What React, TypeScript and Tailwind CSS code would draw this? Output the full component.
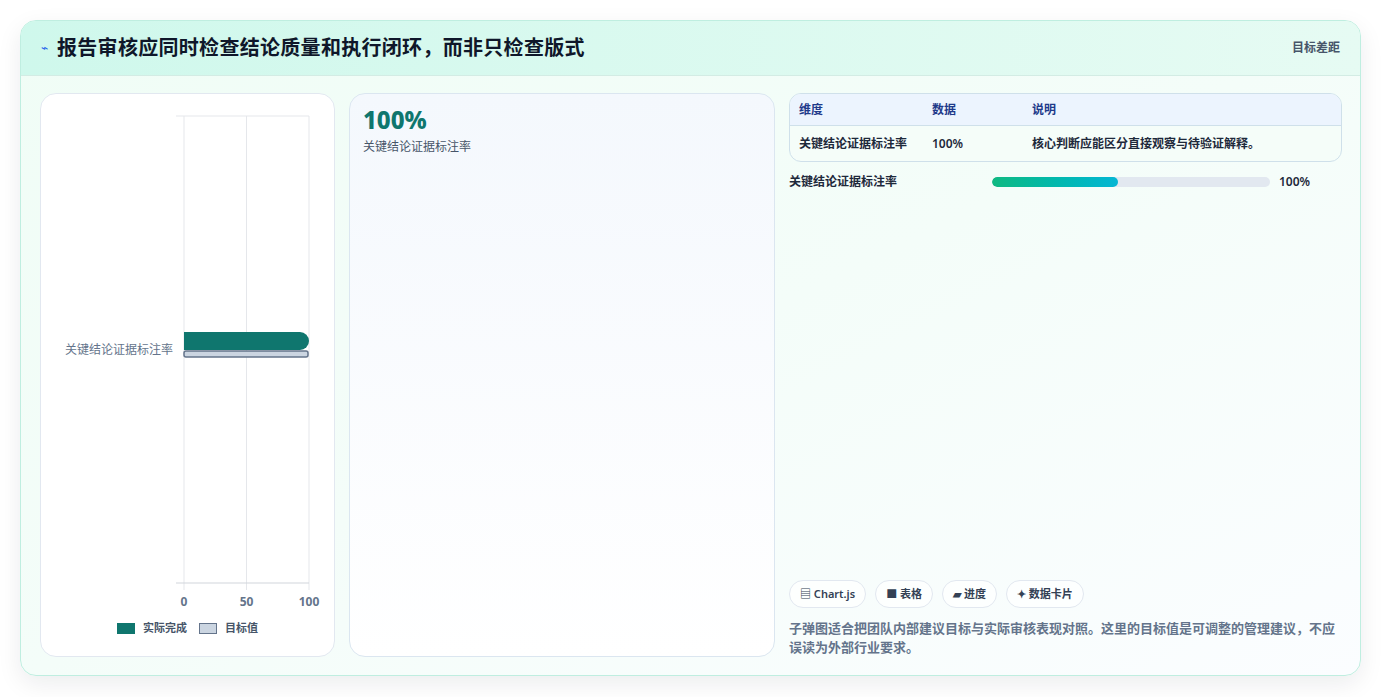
const font = { fontFamily: '"Noto Sans", "Noto Sans CJK SC", sans-serif' };

function BulletChart() {
  // plot area inside svg: x 143..268 (0..100), y 22..489
  const x0 = 143;
  const w = 125;
  return (
    <svg width="294" height="520" className="block shrink-0">
      <line x1={135} y1={22} x2={268} y2={22} stroke="#e5e7eb" />
      {[0, 50, 100].map((v) => (
        <line key={v} x1={x0 + (w * v) / 100} y1={22} x2={x0 + (w * v) / 100} y2={496} stroke="#e5e7eb" />
      ))}
      <line x1={135} y1={489} x2={268} y2={489} stroke="#d1d5db" />
      <text x={132} y={260} textAnchor="end" fontSize="12" fill="#64748b" style={font}>关键结论证据标注率</text>
      <path d={`M${x0} 238 H${x0 + w - 9} A9 9 0 0 1 ${x0 + w - 9} 256 H${x0} Z`} fill="#0f766e" />
      <rect x={x0} y={257} width={w - 1} height={6} rx={2} fill="#cbd5e1" stroke="#64748b" strokeWidth="1.5" />
      {[0, 50, 100].map((v) => (
        <text key={v} x={x0 + (w * v) / 100} y={512} textAnchor="middle" fontSize="12" fontWeight="700" fill="#64748b" style={font}>{v}</text>
      ))}
    </svg>
  );
}

export default function App() {
  return (
    <div className="w-[1381px] h-[697px] bg-white p-5" style={font}>
      <div className="h-[656px] rounded-2xl border border-[#bfeee0] overflow-hidden bg-gradient-to-br from-[#f0fdf6] via-[#f4fdf9] to-[#fbfdff] shadow-[0_8px_24px_rgba(15,23,42,0.08)] flex flex-col">
        <div className="h-[55px] shrink-0 flex items-center justify-between px-5 bg-gradient-to-r from-[#cff8ec] to-[#e6fbf3] border-b border-[#d3ece4]">
          <div className="flex items-center gap-[9px]">
            <span className="text-[12px] text-[#2563eb]">⌁</span>
            <h1 className="text-[20px] font-bold text-[#0f172a] tracking-[0.3px]">报告审核应同时检查结论质量和执行闭环，而非只检查版式</h1>
          </div>
          <span className="text-[12px] font-semibold text-[#475569]">目标差距</span>
        </div>
        <div className="flex-1 min-h-0 flex gap-[14px] pt-[17px] pl-[19px] pr-[18px] pb-[18px]">
          <div className="w-[295px] bg-white rounded-2xl border border-[#e2e8f0] flex flex-col items-start overflow-hidden">
            <BulletChart />
            <div className="w-full flex justify-center items-center gap-2 mt-[6px] text-[11px] font-semibold text-[#475569]">
              <span className="w-[18px] h-[11px] bg-[#0f766e]" />
              <span>实际完成</span>
              <span className="w-[18px] h-[11px] bg-[#cbd5e1] border-[1.5px] border-[#64748b] ml-1" />
              <span>目标值</span>
            </div>
          </div>
          <div className="w-[426px] rounded-2xl border border-[#dbe6f0] bg-gradient-to-b from-[#f4f8fd] to-white px-[13px] pt-[10px]">
            <div className="text-[24px] font-extrabold text-[#0f766e] leading-8">100%</div>
            <div className="text-[12px] text-[#475569] mt-[2px]">关键结论证据标注率</div>
          </div>
          <div className="flex-1 flex flex-col">
            <div className="rounded-xl border border-[#cfe0ea] overflow-hidden bg-[#f5fdf9] text-[12px] font-semibold">
              <div className="h-[32px] flex items-center bg-[#ecf4fe] border-b border-[#cfe0ea] text-[#1e3a8a] px-[9px]">
                <span className="w-[133px]">维度</span><span className="w-[100px]">数据</span><span>说明</span>
              </div>
              <div className="h-[35px] flex items-center text-[#1e293b] px-[9px]">
                <span className="w-[133px]">关键结论证据标注率</span><span className="w-[100px]">100%</span><span>核心判断应能区分直接观察与待验证解释。</span>
              </div>
            </div>
            <div className="flex items-center mt-[11px] text-[12px] font-semibold text-[#1e293b]">
              <span className="w-[203px]">关键结论证据标注率</span>
              <div className="w-[278px] h-[10px] rounded-full bg-[#e2e8f0] overflow-hidden">
                <div className="h-full w-[126px] rounded-full bg-gradient-to-r from-[#10b981] to-[#06b6d4]" />
              </div>
              <span className="ml-[9px]">100%</span>
            </div>
            <div className="flex-1" />
            <div className="flex gap-[9px] text-[11px] font-semibold text-[#334155]">
              {['▤ Chart.js', '■ 表格', '▰ 进度', '✦ 数据卡片'].map((t) => (
                <span key={t} className="h-[28px] px-[10px] flex items-center rounded-full border border-[#e2e8f0] bg-white/70">{t}</span>
              ))}
            </div>
            <p className="mt-[11px] text-[13px] leading-[19px] font-semibold text-[#64748b]">子弹图适合把团队内部建议目标与实际审核表现对照。这里的目标值是可调整的管理建议，不应误读为外部行业要求。</p>
          </div>
        </div>
      </div>
    </div>
  );
}
